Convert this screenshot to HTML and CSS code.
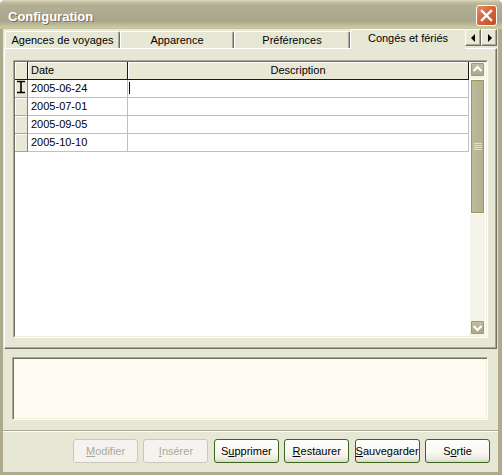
FILE: index.html
```html
<!DOCTYPE html>
<html lang="fr">
<head>
<meta charset="utf-8">
<title>Configuration</title>
<link rel="stylesheet" href="styles.css">
</head>
<body>
<div class="window">
  <div class="titlebar">
    <span class="title">Configuration</span>
    <div class="close">
      <svg width="19" height="19" viewBox="0 0 19 19"><path d="M5 5 L14 14 M14 5 L5 14" stroke="#fff" stroke-width="2.4" stroke-linecap="square"/></svg>
    </div>
  </div>
  <div class="client">
    <div class="tabstrip">
      <div class="tab t1">Agences de voyages</div>
      <div class="tab t2">Apparence</div>
      <div class="tab t3">Préférences</div>
      <div class="tab t4 sel">Congés et fériés</div>
      <div class="tabarrows">
        <div class="tabarrow"><svg width="14" height="15" viewBox="0 0 14 15"><path d="M9 4 L5 8 L9 12 Z" fill="#000"/></svg></div>
        <div class="tabarrow"><svg width="14" height="15" viewBox="0 0 14 15"><path d="M6 4 L10 8 L6 12 Z" fill="#000"/></svg></div>
      </div>
    </div>
    <div class="panel">
      <div class="grid">
        <div class="grid-inner">
          <div class="table">
            <div class="row head">
              <div class="cell ind"></div>
              <div class="cell c-date">Date</div>
              <div class="cell c-desc">Description</div>
            </div>
            <div class="row">
              <div class="cell ind"><svg width="12" height="17" viewBox="0 0 12 17"><path d="M2 1.5 H10 M2 12.5 H10 M6 1.5 V12.5" stroke="#000" stroke-width="1.6" fill="none"/></svg></div>
              <div class="cell c-date">2005-06-24</div>
              <div class="cell c-desc"><span class="caret"></span></div>
            </div>
            <div class="row">
              <div class="cell ind"></div>
              <div class="cell c-date">2005-07-01</div>
              <div class="cell c-desc"></div>
            </div>
            <div class="row">
              <div class="cell ind"></div>
              <div class="cell c-date">2005-09-05</div>
              <div class="cell c-desc"></div>
            </div>
            <div class="row">
              <div class="cell ind"></div>
              <div class="cell c-date">2005-10-10</div>
              <div class="cell c-desc"></div>
            </div>
          </div>
          <div class="vscroll">
            <div class="sbtn"><svg width="13" height="13" viewBox="0 0 13 13"><path d="M2.5 8 L6.5 4 L10.5 8" stroke="#fff" stroke-width="2.2" fill="none"/></svg></div>
            <div class="thumb">
              <svg width="8" height="8" viewBox="0 0 8 8"><path d="M0 0.5 H8 M0 2.5 H8 M0 4.5 H8 M0 6.5 H8" stroke="#E4E2CB" stroke-width="1"/></svg>
            </div>
            <div class="track"></div>
            <div class="sbtn down"><svg width="13" height="13" viewBox="0 0 13 13"><path d="M2.5 5 L6.5 9 L10.5 5" stroke="#fff" stroke-width="2.2" fill="none"/></svg></div>
          </div>
        </div>
      </div>
    </div>
    <div class="memo"></div>
    <div class="separator"></div>
    <div class="buttonbar">
      <div class="btn disabled"><u>M</u>odifier</div>
      <div class="btn disabled"><u>I</u>nsérer</div>
      <div class="btn">S<u>u</u>pprimer</div>
      <div class="btn"><u>R</u>estaurer</div>
      <div class="btn"><u>S</u>auvegarder</div>
      <div class="btn">S<u>o</u>rtie</div>
    </div>
  </div>
</div>
</body>
</html>
```
FILE: styles.css
```css
* { box-sizing: border-box; }
html, body { margin: 0; padding: 0; background: #fff; }
body { font-family: "Liberation Sans", Arial, sans-serif; font-size: 11px; color: #000; }

.window {
  width: 502px;
  height: 475px;
  display: flex;
  flex-direction: column;
  background: #ADAA8E;
  border-radius: 5px 5px 0 0;
  overflow: hidden;
}

.titlebar {
  height: 29px;
  flex: none;
  display: flex;
  align-items: flex-start;
  padding: 0 5px 0 8px;
  background: linear-gradient(#DCDBBA 0, #C4C2A4 2px, #B2AF95 5px, #A9A68B 21px, #B7B596 24px, #C9C8A2 27px, #C4C39C 29px);
}
.title {
  flex: 1;
  font-weight: bold;
  font-size: 13px;
  line-height: 15px;
  padding-top: 9px;
  color: #fff;
  text-shadow: 1px 1px 0 #76735C;
}
.close {
  margin-top: 5px;
  width: 21px;
  height: 21px;
  border: 1px solid #fff;
  border-radius: 3px;
  background: linear-gradient(135deg, #E88D63, #D5623A 50%, #BF4E28);
  display: flex;
  align-items: center;
  justify-content: center;
}

.client {
  flex: 1;
  margin: 0 4px 3px 3px;
  background: #E7E7D6;
  display: flex;
  flex-direction: column;
}

/* tabs */
.tabstrip {
  height: 19px;
  flex: none;
  display: flex;
  align-items: flex-end;
  padding-left: 2px;
}
.tab {
  height: 17px;
  border-top: 1px solid #fff;
  border-left: 1px solid #fff;
  border-right: 1px solid #716F64;
  box-shadow: inset -1px 0 #ACA899;
  border-radius: 2px 2px 0 0;
  text-align: center;
  padding-top: 2px;
  line-height: 13px;
  white-space: nowrap;
  overflow: hidden;
  background: #E7E7D6;
}
.t1 { width: 115px; }
.t2 { width: 114px; }
.t3 { width: 116px; }
.t4 { width: 115px; }
.tab.sel {
  height: 20px;
  margin-bottom: -1px;
  position: relative;
  z-index: 1;
  padding-top: 2px;
  border-right: none;
  box-shadow: none;
}
.tabarrows {
  align-self: flex-start;
  display: flex;
  position: relative;
  z-index: 2;
}
.tabarrow {
  width: 16px;
  height: 17px;
  background: #E7E7D6;
  border: 1px solid;
  border-color: #fff #716F64 #716F64 #fff;
  box-shadow: inset -1px -1px #ACA899;
  display: flex;
  align-items: center;
  justify-content: center;
}

.panel {
  height: 301px;
  flex: none;
  margin: 0 1px;
  border-top: 1px solid #fff;
  border-left: 1px solid #fff;
  border-right: 1px solid #716F64;
  border-bottom: 1px solid #716F64;
  box-shadow: inset -1px -1px #ACA899;
  padding: 11px 8px 10px 8px;
  display: flex;
}

/* grid */
.grid {
  flex: 1;
  border: 1px solid;
  border-color: #ACA899 #fff #fff #ACA899;
  display: flex;
}
.grid-inner {
  flex: 1;
  border: 1px solid;
  border-color: #716F64 #F1EFE2 #F1EFE2 #716F64;
  background: #fff;
  display: flex;
  gap: 1px;
}
.table {
  width: 454px;
  display: flex;
  flex-direction: column;
}
.row {
  display: flex;
  height: 18px;
}
.cell {
  height: 18px;
  line-height: 17px;
  padding-left: 3px;
  border-right: 1px solid #C0C0C0;
  border-bottom: 1px solid #C0C0C0;
  white-space: nowrap;
  overflow: hidden;
}
.ind {
  width: 13px;
  padding: 0;
  background: #E9E8D7;
  border-right: 1px solid #808080;
  border-bottom: 1px solid #A8A699;
  box-shadow: inset 1px 1px #fff;
}
.c-date { width: 100px; }
.c-desc { width: 341px; padding-left: 1px; }
.row.head .cell {
  background: #E9E8D7;
  border-right: 1px solid #1A1A1A;
  border-bottom: 1px solid #1A1A1A;
  box-shadow: inset 1px 1px #fff;
}
.row.head .c-desc { text-align: center; padding-left: 0; }
.caret {
  display: inline-block;
  width: 1px;
  height: 12px;
  background: #000;
  vertical-align: -2px;
}

/* scrollbar */
.vscroll {
  width: 15px;
  display: flex;
  flex-direction: column;
  background: #F5F4EB;
  padding-bottom: 1px;
}
.sbtn {
  height: 15px;
  flex: none;
  border: 1px solid #F4F3E6;
  box-shadow: inset 0 0 0 1px #9C9A7C;
  border-radius: 2px;
  background: linear-gradient(#C3C0A2, #AAA789);
  display: flex;
  align-items: center;
  justify-content: center;
}
.thumb {
  margin-top: 2px;
  height: 135px;
  flex: none;
  border: 1px solid #fff;
  box-shadow: inset 0 0 0 1px #999A5E;
  background: linear-gradient(90deg, #BEBA9C, #B3AF8F);
  display: flex;
  align-items: center;
  justify-content: center;
}
.track { flex: 1; }

/* memo */
.memo {
  height: 63px;
  flex: none;
  margin: 8px 10px 10px 9px;
  background: #FFFBF0;
  border: 1px solid;
  border-color: #ACA899 #fff #fff #ACA899;
  box-shadow: inset 1px 1px #716F64, inset -1px -1px #F1EFE2;
}
.separator {
  height: 2px;
  flex: none;
  border-top: 1px solid #ACA899;
  border-bottom: 1px solid #fff;
}

/* buttons */
.buttonbar {
  flex: 1;
  display: flex;
  justify-content: flex-end;
  align-items: flex-start;
  gap: 5.4px;
  padding: 7px 8px 0 0;
}
.btn {
  width: 65px;
  height: 24px;
  border: 1px solid #3A6620;
  border-radius: 3px;
  background: linear-gradient(#FFFFFB 0, #F8F7F0 60%, #ECEAE0 85%, #DAD8CA 100%);
  text-align: center;
  line-height: 22px;
  white-space: nowrap;
}
.btn.disabled {
  border-color: #CAC8BB;
  background: #F4F3EE;
  color: #ACA899;
}
```
